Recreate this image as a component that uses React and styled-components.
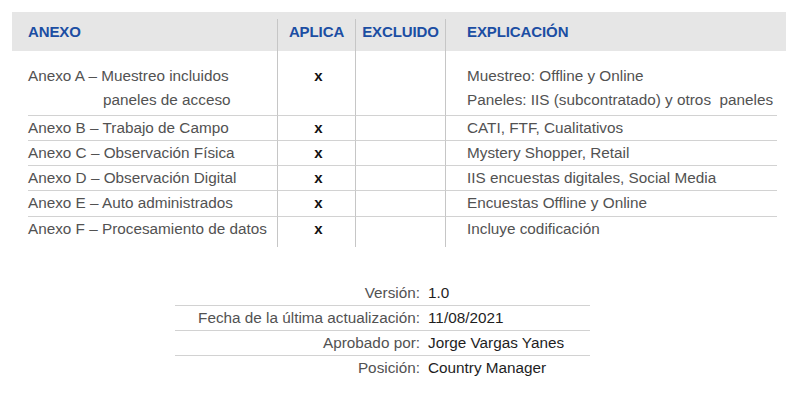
import React from "react";
import styled, { createGlobalStyle } from "styled-components";

const GlobalStyle = createGlobalStyle`
  body {
    margin: 0;
    background: #ffffff;
    font-family: "Liberation Sans", Arial, sans-serif;
  }
`;

const annexes = [
  {
    name: ["Anexo A – Muestreo incluidos", "paneles de acceso"],
    applies: true,
    note: ["Muestreo: Offline y Online", "Paneles: IIS (subcontratado) y otros  paneles"],
  },
  { name: ["Anexo B – Trabajo de Campo"], applies: true, note: ["CATI, FTF, Cualitativos"] },
  { name: ["Anexo C – Observación Física"], applies: true, note: ["Mystery Shopper, Retail"] },
  { name: ["Anexo D – Observación Digital"], applies: true, note: ["IIS encuestas digitales, Social Media"] },
  { name: ["Anexo E – Auto administrados"], applies: true, note: ["Encuestas Offline y Online"] },
  { name: ["Anexo F – Procesamiento de datos"], applies: true, note: ["Incluye codificación"] },
];

const meta = [
  { label: "Versión:", value: "1.0" },
  { label: "Fecha de la última actualización:", value: "11/08/2021" },
  { label: "Aprobado por:", value: "Jorge Vargas Yanes" },
  { label: "Posición:", value: "Country Manager" },
];

function App() {
  return (
    <Page>
      <GlobalStyle />
      <Table>
        <HeadBand>
          <HeadCell>ANEXO</HeadCell>
          <HeadCell $divider $center>APLICA</HeadCell>
          <HeadCell $divider $center>EXCLUIDO</HeadCell>
          <HeadCell $divider $indent>EXPLICACIÓN</HeadCell>
        </HeadBand>
        <Body>
          {annexes.map((row, i) => {
            const first = i === 0;
            const last = i === annexes.length - 1;
            return (
              <React.Fragment key={i}>
                <Cell $first={first} $last={last}>
                  {row.name.map((line, j) => (
                    <Line key={j} $wrapped={j > 0}>{line}</Line>
                  ))}
                </Cell>
                <Cell $first={first} $last={last} $divider $center>
                  {row.applies && <Mark>x</Mark>}
                </Cell>
                <Cell $first={first} $last={last} $divider />
                <Cell $first={first} $last={last} $divider $indent>
                  {row.note.map((line, j) => (
                    <Line key={j}>{line}</Line>
                  ))}
                </Cell>
              </React.Fragment>
            );
          })}
        </Body>
      </Table>

      <MetaTable>
        {meta.map((m, i) => (
          <MetaRow key={m.label} $last={i === meta.length - 1}>
            <MetaLabel>{m.label}</MetaLabel>
            <MetaValue>{m.value}</MetaValue>
          </MetaRow>
        ))}
      </MetaTable>
    </Page>
  );
}

export default App;

const Page = styled.div`
  width: 802px;
  height: 401px;
  padding-top: 12px;
  box-sizing: border-box;
  overflow: hidden;
`;

const Table = styled.div`
  margin-left: 28px;
  width: 749px;
`;

const columns = `249px 78px 90px 332px`;

const HeadBand = styled.div`
  display: grid;
  grid-template-columns: ${columns};
  margin: 0 -9px 0 -16px;
  padding: 0 9px 0 16px;
  height: 39px;
  background: #e6e6e6;
`;

const HeadCell = styled.div`
  display: flex;
  align-items: center;
  justify-content: ${(p) => (p.$center ? "center" : "flex-start")};
  margin-top: ${(p) => (p.$divider ? "7px" : "0")};
  padding-bottom: ${(p) => (p.$divider ? "7px" : "0")};
  padding-left: ${(p) => (p.$indent ? "21px" : "0")};
  border-left: ${(p) => (p.$divider ? "1px solid #c6c6c6" : "none")};
  font-size: 15px;
  font-weight: bold;
  color: #1c4ea3;
  letter-spacing: -0.1px;
`;

const Body = styled.div`
  display: grid;
  grid-template-columns: ${columns};
`;

const Cell = styled.div`
  display: flex;
  flex-direction: column;
  align-items: ${(p) => (p.$center ? "center" : "flex-start")};
  padding-top: ${(p) => (p.$first ? "13px" : "0")};
  padding-bottom: ${(p) => (p.$last ? "6px" : p.$first ? "2px" : "0")};
  padding-left: ${(p) => (p.$indent ? "21px" : p.$center ? "4px" : "0")};
  border-left: ${(p) => (p.$divider ? "1px solid #c6c6c6" : "none")};
  border-bottom: ${(p) => (p.$last ? "none" : "1px solid #d2d2d2")};
`;

const Line = styled.div`
  height: 24.3px;
  line-height: 24.3px;
  font-size: 15.3px;
  color: #525252;
  white-space: pre;
  padding-left: ${(p) => (p.$wrapped ? "75px" : "0")};
`;

const Mark = styled.span`
  height: 24.3px;
  line-height: 24.3px;
  font-size: 15px;
  font-weight: bold;
  color: #111111;
`;

const MetaTable = styled.div`
  margin: 34px 0 0 175px;
  width: 415px;
`;

const MetaRow = styled.div`
  display: grid;
  grid-template-columns: 245px 1fr;
  column-gap: 8px;
  height: 24px;
  line-height: 24px;
  border-bottom: ${(p) => (p.$last ? "none" : "1px solid #d2d2d2")};
`;

const MetaLabel = styled.div`
  text-align: right;
  font-size: 15.3px;
  color: #525252;
  white-space: nowrap;
`;

const MetaValue = styled.div`
  font-size: 15.3px;
  color: #1e1e1e;
  white-space: nowrap;
`;
